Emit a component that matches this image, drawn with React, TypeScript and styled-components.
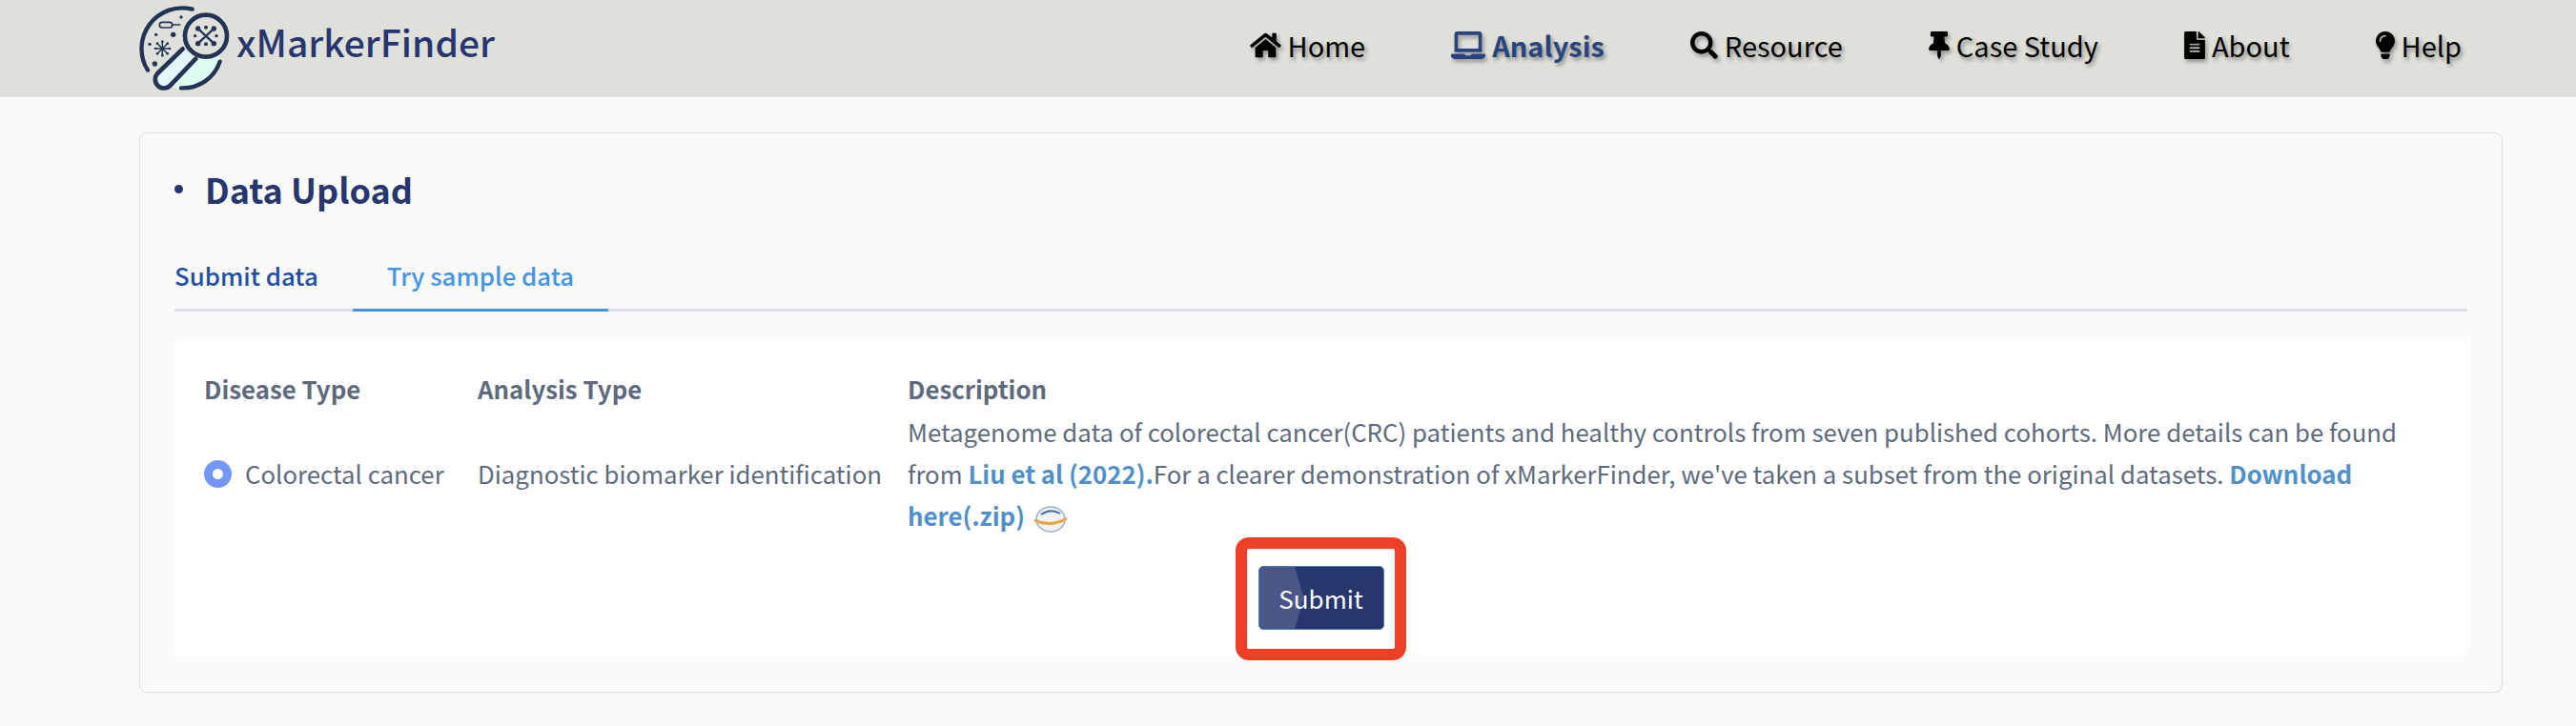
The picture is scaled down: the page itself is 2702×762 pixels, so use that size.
import React from 'react';
import styled, { createGlobalStyle } from 'styled-components';
import { FaHome, FaLaptop, FaSearch, FaThumbtack, FaFileAlt, FaLightbulb } from 'react-icons/fa';

const GlobalStyle = createGlobalStyle`
  html, body {
    margin: 0;
    padding: 0;
    background: #f8f8f8;
    font-family: "Noto Sans CJK SC", "Noto Sans", sans-serif;
  }
`;

const Header = styled.header`
  height: 102px;
  background: #dfe0da;
  display: flex;
  align-items: center;
  padding: 0 120px 0 146px;
  box-sizing: border-box;
`;

const Brand = styled.div`
  display: flex;
  align-items: center;
  gap: 7px;
  margin-right: auto;
`;

const BrandName = styled.span`
  font-size: 39px;
  font-weight: 500;
  color: #27366f;
  line-height: 1;
  margin-top: -16px;
`;

const Nav = styled.nav`
  display: flex;
  align-items: center;
  gap: 90px;
`;

const NavItem = styled.a<{ $active?: boolean }>`
  display: flex;
  align-items: center;
  gap: 7px;
  font-size: 29px;
  line-height: 44px;
  margin-top: -8px;
  font-weight: ${(p) => (p.$active ? 700 : 400)};
  color: ${(p) => (p.$active ? '#27447f' : '#000')};
  text-shadow: 2px 3px 4px rgba(0, 0, 0, 0.4);
`;

const NavIcon = styled.span<{ $width: number }>`
  display: flex;
  flex: none;
  width: ${(p) => p.$width}px;
  height: 29px;
  filter: drop-shadow(2px 3px 2px rgba(0, 0, 0, 0.35));

  svg {
    width: 100%;
    height: 100%;
  }
`;

const Card = styled.section`
  margin: 37px 77px 0 146px;
  height: 588px;
  box-sizing: border-box;
  background: #fafafa;
  border: 1px solid #dcdcdc;
  border-radius: 8px;
  box-shadow: 0 0 16px rgba(255, 255, 255, 0.6);
  padding: 0 36px 0 36px;
`;

const Title = styled.h2`
  margin: 0;
  padding-top: 29px;
  display: flex;
  align-items: center;
  font-size: 36px;
  line-height: 58px;
  font-weight: 700;
  color: #27366f;
  gap: 23px;

  &::before {
    content: '';
    width: 9px;
    height: 9px;
    border-radius: 50%;
    background: #27366f;
    margin-left: 0;
  }
`;

const Tabs = styled.div`
  display: flex;
  margin-top: 36px;
  border-bottom: 3px solid #dde1e7;
`;

const Tab = styled.div<{ $active?: boolean }>`
  font-size: 25.8px;
  line-height: 40px;
  font-weight: 500;
  padding: 6px 36px 15px;
  margin-bottom: -3px;
  color: ${(p) => (p.$active ? '#4393ea' : '#1e4fa3')};
  border-bottom: 3px solid ${(p) => (p.$active ? '#4393ea' : 'transparent')};

  &:first-child {
    padding-left: 0;
  }
`;

const Panel = styled.div`
  margin-top: 29px;
  height: 333px;
  box-sizing: border-box;
  background: #fff;
  border-radius: 6px;
  padding: 30px 29px 0 31px;
`;

const Table = styled.div`
  display: grid;
  grid-template-columns: 287px 451px 1fr;
  row-gap: 1px;
  align-items: center;
  font-size: 25.8px;
  line-height: 44px;
  color: #5e6a7d;
`;

const HeadCell = styled.div`
  font-weight: 700;
`;

const RadioCell = styled.label`
  display: flex;
  align-items: center;
  gap: 14px;
`;

const Radio = styled.span`
  width: 29px;
  height: 29px;
  box-sizing: border-box;
  border: 9px solid #7497fb;
  border-radius: 50%;
  background: #fff;
`;

const Link = styled.a`
  color: #4f8fcb;
  font-weight: 700;
`;

const ZipIcon = styled.svg`
  width: 38px;
  height: 28px;
  vertical-align: -7px;
  margin-left: 8px;
`;

const Actions = styled.div`
  display: flex;
  justify-content: center;
  margin: 31px 0 0 -2px;
`;

const SubmitWrap = styled.div`
  position: relative;
`;

const SubmitButton = styled.button`
  position: relative;
  display: block;
  width: 132px;
  height: 67px;
  padding: 0;
  border: 1px solid #4a7fb8;
  border-radius: 5px;
  background: #27366f;
  color: #fff;
  font-family: inherit;
  font-size: 26px;
  overflow: hidden;

  &::before {
    content: '';
    position: absolute;
    inset: 0 auto 0 0;
    width: 47px;
    background: rgba(255, 255, 255, 0.16);
    clip-path: polygon(0 0, 80% 0, 100% 50%, 80% 100%, 0 100%);
  }
`;

const Highlight = styled.div`
  position: absolute;
  top: -30px;
  right: -23px;
  bottom: -32px;
  left: -24px;
  border: 12px solid #ee4027;
  border-radius: 14px;
  pointer-events: none;
`;

const Logo = () => (
  <svg width="95" height="92" viewBox="48 6 285 276" fill="none" stroke="#233354" strokeLinecap="round">
    <path d="M303 150 A125 125 0 0 1 170 270 L130 255 L230 160 Z" fill="#dffcf2" stroke="none" />
    <path d="M75 212 A128 128 0 0 1 215 20" strokeWidth="13" />
    <path d="M180 268 A122 122 0 0 0 302 185" strokeWidth="13" />
    <path d="M185 145 L106 222 A24 24 0 0 0 146 260 L226 176" fill="#e3f6fa" strokeWidth="14" />
    <circle cx="258" cy="104" r="66" fill="#dfe0da" strokeWidth="14" />
    <rect x="112" y="61" width="40" height="17" rx="8" strokeWidth="5" />
    <path d="M152 69 H176" strokeWidth="5" />
    <g fill="#233354" stroke="none">
      <circle cx="180" cy="45" r="5" />
      <circle cx="155" cy="100" r="8" />
      <circle cx="101" cy="100" r="5" />
      <circle cx="81" cy="130" r="5" />
      <circle cx="97" cy="192" r="8" />
      <circle cx="258" cy="77" r="6" />
      <circle cx="258" cy="130" r="6" />
      <circle cx="224" cy="104" r="5" />
      <circle cx="291" cy="104" r="5" />
      <circle cx="233" cy="81" r="8" />
      <circle cx="283" cy="81" r="8" />
      <circle cx="233" cy="128" r="8" />
      <circle cx="283" cy="128" r="8" />
      <circle cx="121" cy="122" r="4" />
      <circle cx="121" cy="166" r="4" />
      <circle cx="99" cy="144" r="4" />
      <circle cx="144" cy="144" r="4" />
      <circle cx="105" cy="128" r="4" />
      <circle cx="137" cy="128" r="4" />
      <circle cx="105" cy="160" r="4" />
      <circle cx="137" cy="160" r="4" />
    </g>
    <path d="M233 81 L283 128 M283 81 L233 128" strokeWidth="7" />
    <path d="M121 122 V166 M99 144 H144 M105 128 L137 160 M137 128 L105 160" strokeWidth="4.5" />
  </svg>
);

const navLinks = [
  { label: 'Home', icon: <FaHome />, width: 33 },
  { label: 'Analysis', icon: <FaLaptop />, width: 36, active: true },
  { label: 'Resource', icon: <FaSearch />, width: 29 },
  { label: 'Case Study', icon: <FaThumbtack />, width: 22 },
  { label: 'About', icon: <FaFileAlt />, width: 22 },
  { label: 'Help', icon: <FaLightbulb />, width: 20 },
];

const App: React.FC = () => {
  return (
    <>
      <GlobalStyle />
      <Header>
        <Brand>
          <Logo />
          <BrandName>xMarkerFinder</BrandName>
        </Brand>
        <Nav>
          {navLinks.map((link) => (
            <NavItem key={link.label} $active={link.active}>
              <NavIcon $width={link.width}>{link.icon}</NavIcon>
              {link.label}
            </NavItem>
          ))}
        </Nav>
      </Header>
      <Card>
        <Title>Data Upload</Title>
        <Tabs>
          <Tab>Submit data</Tab>
          <Tab $active>Try sample data</Tab>
        </Tabs>
        <Panel>
          <Table>
            <HeadCell>Disease Type</HeadCell>
            <HeadCell>Analysis Type</HeadCell>
            <HeadCell>Description</HeadCell>
            <RadioCell>
              <Radio />
              Colorectal cancer
            </RadioCell>
            <div>Diagnostic biomarker identification</div>
            <div>
              Metagenome data of colorectal cancer(CRC) patients and healthy controls from seven published cohorts. More
              details can be found from <Link>Liu et al (2022).</Link>For a clearer demonstration of xMarkerFinder, we've
              taken a subset from the original datasets. <Link>Download here(.zip)</Link>
              <ZipIcon viewBox="0 0 38 28">
                <ellipse cx="19" cy="14" rx="15" ry="13" fill="#eef1f5" stroke="#9fb0c4" strokeWidth="1.5" />
                <path d="M9 9 Q19 2 29 8" fill="none" stroke="#3f6fb5" strokeWidth="2" />
                <path d="M2 15 Q19 23 36 13" fill="none" stroke="#e8a33d" strokeWidth="3" />
              </ZipIcon>
            </div>
          </Table>
          <Actions>
            <SubmitWrap>
              <SubmitButton>Submit</SubmitButton>
              <Highlight />
            </SubmitWrap>
          </Actions>
        </Panel>
      </Card>
    </>
  );
};

export default App;
